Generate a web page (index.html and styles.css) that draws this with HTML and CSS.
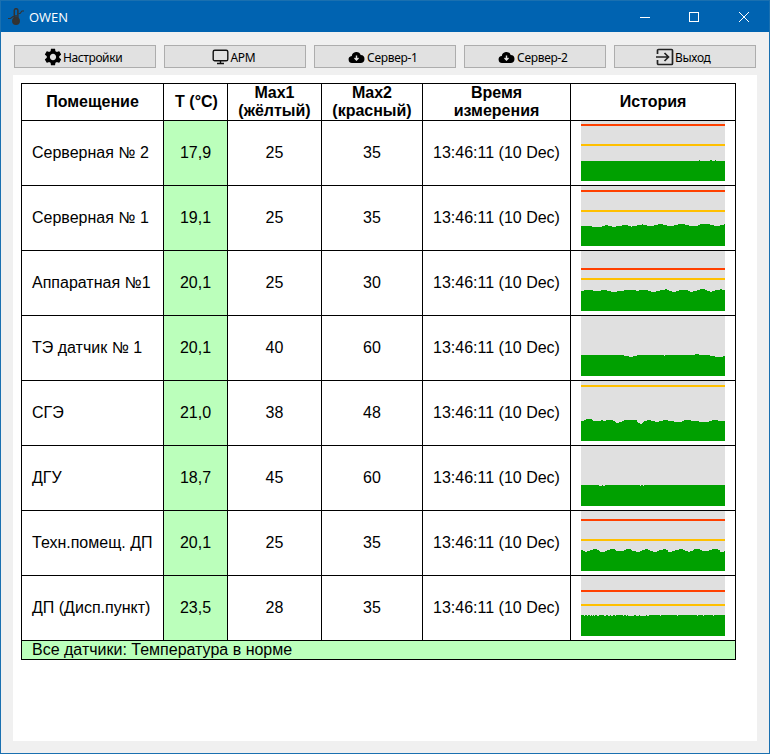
FILE: index.html
```html
<!DOCTYPE html>
<html lang="ru">
<head>
<meta charset="utf-8">
<title>OWEN</title>
<link rel="stylesheet" href="styles.css">
</head>
<body>
<div class="window">
  <header class="titlebar">
    <svg class="app-icon" width="18" height="18" viewBox="0 0 18 18" fill="none" stroke="#333" stroke-width="1.5">
      <path d="M0 10.500h2.500l2.500-2h1.500M10.500 5.500h1.500l2-2.500h2" stroke-width="1.200"/><path d="M6.300 10V2.500a1.800 1.800 0 0 1 3.600 0v7.500M8 7v5"/><circle cx="8" cy="13" r="3.200" fill="#333"/>
    </svg>
    <span class="title">OWEN</span>
    <svg class="controls" width="112" height="14" viewBox="0 0 112 14" fill="none" stroke="#fff">
      <path d="M1 7.5h10"/><rect x="50.5" y="2.500" width="9" height="9"/><path d="M100 2l10 10M110 2l-10 10"/>
    </svg>
  </header>
  <nav class="toolbar">
    <button class="btn"><svg width="18" height="18" viewBox="0 0 24 24"><path transform="translate(12 12) scale(1.16) translate(-12 -12)" d="M19.14 12.94c.04-.3.06-.61.06-.94 0-.32-.02-.64-.07-.94l2.03-1.58c.18-.14.23-.41.12-.61l-1.92-3.32c-.12-.22-.37-.29-.59-.22l-2.39.96c-.5-.38-1.03-.7-1.62-.94l-.36-2.54c-.04-.24-.24-.41-.48-.41h-3.84c-.24 0-.43.17-.47.41l-.36 2.54c-.59.24-1.13.57-1.62.94l-2.39-.96c-.22-.08-.47 0-.59.22L2.74 8.87c-.12.21-.08.47.12.61l2.03 1.58c-.05.3-.09.63-.09.94s.02.64.07.94l-2.03 1.58c-.18.14-.23.41-.12.61l1.92 3.32c.12.22.37.29.59.22l2.39-.96c.5.38 1.03.7 1.62.94l.36 2.54c.05.24.24.41.48.41h3.84c.24 0 .44-.17.47-.41l.36-2.54c.59-.24 1.13-.56 1.62-.94l2.39.96c.22.08.47 0 .59-.22l1.92-3.32c.12-.22.07-.47-.12-.61l-2.01-1.58zM12 15.6c-1.98 0-3.6-1.62-3.6-3.6s1.62-3.6 3.6-3.6 3.6 1.62 3.6 3.6-1.62 3.6-3.6 3.6z"/></svg><span class="label settings">Настройки</span></button>
    <button class="btn"><svg width="18" height="18" viewBox="0 0 18 18" fill="none" stroke="#111" stroke-width="1.4"><rect x="1.2" y="2.2" width="14.6" height="10.6" rx="1.6"/><path d="M8.500 13v2.500M5 15.500h7"/></svg><span class="label arm">АРМ</span></button>
    <button class="btn"><svg width="18" height="18" viewBox="0 0 18 18"><path d="M4.500 15a3.500 3.500 0 0 1-.700-7.100A4.600 4.600 0 0 1 12.700 7A4 4 0 0 1 12.200 15z"/><path d="M8.500 7.500v4M6.500 10L8.500 12L10.500 10" fill="none" stroke="#e1e1e1" stroke-width="1.400"/></svg><span class="label server">Сервер-1</span></button>
    <button class="btn"><svg width="18" height="18" viewBox="0 0 18 18"><path d="M4.500 15a3.500 3.500 0 0 1-.700-7.100A4.600 4.600 0 0 1 12.700 7A4 4 0 0 1 12.200 15z"/><path d="M8.500 7.500v4M6.500 10L8.500 12L10.500 10" fill="none" stroke="#e1e1e1" stroke-width="1.400"/></svg><span class="label server">Сервер-2</span></button>
    <button class="btn"><svg width="18" height="18" viewBox="0 0 18 18" fill="none" stroke="#222" stroke-width="1.7"><path d="M1.500 6V2.500a1 1 0 0 1 1-1h13a1 1 0 0 1 1 1v13a1 1 0 0 1-1 1h-13a1 1 0 0 1-1-1V12M0 9h12M8.500 5L12.500 9L8.500 13"/></svg><span class="label exit">Выход</span></button>
  </nav>
  <main class="panel">
    <table class="sensors">
      <colgroup><col class="c1"><col class="c2"><col class="c3"><col class="c4"><col class="c5"><col class="c6"></colgroup>
      <thead><tr><th>Помещение</th><th class="temp-head">T (°C)</th><th>Max1<br>(жёлтый)</th><th>Max2<br>(красный)</th><th>Время<br>измерения</th><th>История</th></tr></thead>
      <tbody id="rows"></tbody>
      <tfoot><tr><td colspan="6">Все датчики: Температура в норме</td></tr></tfoot>
    </table>
  </main>
</div>
<script src="app.js"></script>
</body>
</html>
```

FILE: styles.css
```css
* { box-sizing: border-box; }
body { margin: 0; }
.window { width: 770px; height: 754px; border: 1px solid #1a70b0; background: #f0f0f0; display: flex; flex-direction: column; overflow: hidden; }
.titlebar { height: 31px; background: #0063b1; color: #fff; display: flex; align-items: center; padding: 0 18px 0 7px; font: 13px "Open Sans", sans-serif; }
.app-icon { margin-right: 3px; }
.title { flex: 1; }
.toolbar { display: flex; gap: 8px; padding: 13px 13px 0; height: 43px; }
.btn { flex: none; width: 142px; height: 23px; margin: 0; padding: 0; border: 1px solid #adadad; background: #e1e1e1; display: flex; align-items: center; justify-content: center; font: 12px/18px "Noto Sans", sans-serif; letter-spacing: -0.3px; color: #000; }
.btn svg { flex: none; }
.label { flex: none; white-space: nowrap; text-align: left; padding-top: 2px; margin-left: 1px; }
.settings { width: 63px; letter-spacing: -0.4px; }
.arm { width: 28px; }
.server { width: 55px; }
.exit { width: 39px; }
.panel { width: 744px; height: 666px; margin-left: 12px; padding: 8px; background: #fff; }
.sensors { width: 715px; border-collapse: separate; border-spacing: 0; table-layout: fixed; border-top: 1px solid #000; border-left: 1px solid #000; font: 16px/18px "Liberation Sans", Arial, sans-serif; color: #000; }
.c1 { width: 142px; } .c2 { width: 64px; } .c3 { width: 94px; } .c4 { width: 101px; } .c5 { width: 148px; } .c6 { width: 165px; }
th, td { border-right: 1px solid #000; border-bottom: 1px solid #000; padding: 0; text-align: center; vertical-align: middle; white-space: nowrap; }
th { height: 37px; }
.temp-head { padding-left: 2px; }
tbody td { height: 65px; }
tbody td:first-child { text-align: left; padding-left: 10px; }
.temp, tfoot td { background: #bfb; }
.history { vertical-align: top; }
tbody .history { text-align: left; padding-left: 10px; }
.history svg { display: block; }
tfoot td { height: 19px; text-align: left; padding-left: 10px; }
```

FILE: app.js
```js
// Each profile is a list of [start x, top y] steps across the 144px history strip.
const spikes = (base, other, spans) => [[0, base], ...spans.flatMap(([a, b]) => [[a, other], [b, base]])];
const rows = [
  ["Серверная № 2", "17,9", 25, 35, 3, 23, spikes(40, 39, [[118,119],[129,131],[134,135]])],
  ["Серверная № 1", "19,1", 25, 35, 4, 24, [[0,40],[11,41],[21,40],[24,39],[27,40],[31,41],[35,40],[41,39],[47,40],[50,41],[51,40],[56,39],[61,38],[62,39],[66,40],[73,39],[77,38],[82,39],[86,40],[93,39],[97,38],[104,39],[108,40],[117,39],[119,38],[129,39],[133,40],[139,39],[143,38]]],
  ["Аппаратная №1", "20,1", 25, 30, 17, 27, [[0,40],[3,39],[12,40],[20,39],[26,40],[30,41],[36,40],[43,39],[55,40],[58,39],[67,40],[70,41],[75,40],[79,39],[84,38],[86,39],[88,40],[91,41],[95,40],[98,39],[107,40],[109,41],[112,40],[116,39],[119,38],[124,39],[126,40],[129,41],[131,40],[134,39],[139,38],[141,39]]],
  ["ТЭ датчик № 1", "20,1", 40, 60, null, null, [[0,39],[43,40],[48,41],[52,40],[56,39],[83,40],[84,39],[114,38],[118,39],[129,40],[134,41],[142,40]]],
  ["СГЭ", "21,0", 38, 48, null, 4, [[0,40],[3,39],[5,38],[11,39],[12,40],[20,39],[22,40],[25,39],[32,40],[34,41],[35,42],[38,41],[41,40],[43,39],[56,41],[57,42],[59,43],[61,42],[62,41],[63,40],[66,39],[70,40],[74,41],[78,40],[82,39],[87,40],[93,41],[101,40],[103,39],[110,40],[118,41],[128,40],[131,39],[137,40]]],
  ["ДГУ", "18,7", 45, 60, null, null, spikes(39, 40, [[18,21],[22,24],[59,60],[62,63]])],
  ["Техн.помещ. ДП", "20,1", 25, 35, 8, 28, [[0,39],[2,40],[4,41],[6,40],[9,39],[12,38],[16,39],[18,40],[19,41],[24,40],[26,39],[29,38],[34,39],[35,40],[43,39],[45,38],[50,39],[51,40],[55,41],[59,40],[61,39],[64,38],[67,39],[69,40],[72,41],[76,40],[78,39],[82,38],[85,39],[87,41],[91,40],[94,39],[98,38],[102,39],[104,40],[107,41],[109,40],[112,39],[113,38],[119,39],[121,40],[128,39],[131,38],[137,39],[139,41],[143,40]]],
  ["ДП (Дисп.пункт)", "23,5", 28, 35, 14, 28, spikes(39, 40, [[3,4],[6,7],[9,10],[11,12],[13,14],[16,18],[23,25],[27,29],[30,32],[34,35],[42,43],[45,46],[47,53],[55,58],[59,65],[66,68],[79,80],[96,97],[116,117],[122,123],[132,133]])]
];
const chart = (red, yellow, steps) => {
  const outline = steps.map(([x, y]) => `H${x}V${y}`).join("");
  const limit = (y, color) => y === null ? "" : `<rect y="${y}" width="144" height="2" fill="${color}"/>`;
  return `<svg width="144" height="60" viewBox="0 0 144 60" shape-rendering="crispEdges"><rect width="144" height="60" fill="#e0e0e0"/>${limit(red, "#ff4000")}${limit(yellow, "#ffc000")}<path fill="#00a000" d="M0 60${outline}H144V60Z"/></svg>`;
};
document.getElementById("rows").innerHTML = rows.map(([name, t, m1, m2, red, yellow, steps]) =>
  `<tr><td>${name}</td><td class="temp">${t}</td><td>${m1}</td><td>${m2}</td><td>13:46:11 (10 Dec)</td><td class="history">${chart(red, yellow, steps)}</td></tr>`).join("");
```
